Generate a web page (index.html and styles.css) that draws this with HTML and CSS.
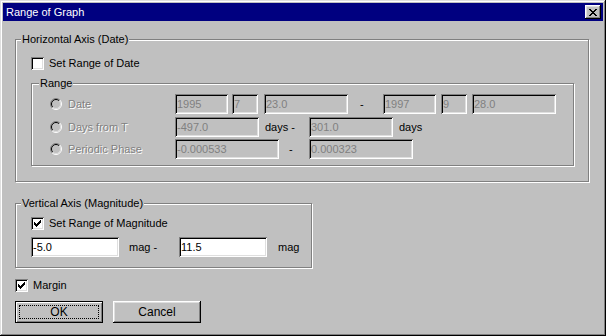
FILE: index.html
```html
<!DOCTYPE html>
<html>
<head>
<meta charset="utf-8">
<title>Range of Graph</title>
<link rel="stylesheet" href="styles.css">
</head>
<body>
<div class="window">
  <div class="titlebar">
    <span class="title">Range of Graph</span>
    <span class="close"><svg width="8" height="7" viewBox="0 0 8 7" shape-rendering="crispEdges"><path d="M0 0h2v1H0zM6 0h2v1H6zM1 1h2v1H1zM5 1h2v1H5zM2 2h4v1H2zM3 3h2v1H3zM2 4h4v1H2zM1 5h2v1H1zM5 5h2v1H5zM0 6h2v1H0zM6 6h2v1H6z" fill="#000"/></svg></span>
  </div>
  <div class="client">
    <div class="group hgroup">
      <span class="group-label">Horizontal Axis (Date)</span>
      <div class="check"><span class="box"></span><span>Set Range of Date</span></div>
      <div class="group rgroup">
        <span class="group-label range-label">Range</span>
        <div class="row">
          <div class="radio"><svg class="radio-dot" width="12" height="12" viewBox="0 0 12 12"><circle cx="6" cy="6" r="4" fill="#c0c0c0"/><path d="M2.1 9.9A5.5 5.5 0 0 1 9.9 2.1" fill="none" stroke="#808080"/><path d="M9.9 2.1A5.5 5.5 0 0 1 2.1 9.9" fill="none" stroke="#fff"/><path d="M2.8 9.2A4.5 4.5 0 0 1 9.2 2.8" fill="none" stroke="#000"/><path d="M9.2 2.8A4.5 4.5 0 0 1 2.8 9.2" fill="none" stroke="#dfdfdf"/></svg><span class="dis">Date</span></div>
          <input class="field w53" value="1995" disabled>
          <input class="field w26 ml4" value="7" disabled>
          <input class="field w84 ml6" value="23.0" disabled>
          <span class="dash dash-date">-</span>
          <input class="field w53" value="1997" disabled>
          <input class="field w26 ml5" value="9" disabled>
          <input class="field w84 ml5" value="28.0" disabled>
        </div>
        <div class="row row2">
          <div class="radio"><svg class="radio-dot" width="12" height="12" viewBox="0 0 12 12"><circle cx="6" cy="6" r="4" fill="#c0c0c0"/><path d="M2.1 9.9A5.5 5.5 0 0 1 9.9 2.1" fill="none" stroke="#808080"/><path d="M9.9 2.1A5.5 5.5 0 0 1 2.1 9.9" fill="none" stroke="#fff"/><path d="M2.8 9.2A4.5 4.5 0 0 1 9.2 2.8" fill="none" stroke="#000"/><path d="M9.2 2.8A4.5 4.5 0 0 1 2.8 9.2" fill="none" stroke="#dfdfdf"/></svg><span class="dis">Days from T</span></div>
          <input class="field w84" value="-497.0" disabled>
          <span class="unit days-dash">days -</span>
          <input class="field w84" value="301.0" disabled>
          <span class="unit days">days</span>
        </div>
        <div class="row row3">
          <div class="radio"><svg class="radio-dot" width="12" height="12" viewBox="0 0 12 12"><circle cx="6" cy="6" r="4" fill="#c0c0c0"/><path d="M2.1 9.9A5.5 5.5 0 0 1 9.9 2.1" fill="none" stroke="#808080"/><path d="M9.9 2.1A5.5 5.5 0 0 1 2.1 9.9" fill="none" stroke="#fff"/><path d="M2.8 9.2A4.5 4.5 0 0 1 9.2 2.8" fill="none" stroke="#000"/><path d="M9.2 2.8A4.5 4.5 0 0 1 2.8 9.2" fill="none" stroke="#dfdfdf"/></svg><span class="dis">Periodic Phase</span></div>
          <input class="field w104" value="-0.000533" disabled>
          <span class="dash dash-phase">-</span>
          <input class="field w104" value="0.000323" disabled>
        </div>
      </div>
    </div>

    <div class="group vgroup">
      <span class="group-label">Vertical Axis (Magnitude)</span>
      <div class="check"><span class="box"><svg width="13" height="13" viewBox="0 0 13 13" shape-rendering="crispEdges"><path d="M3 5h1v3H3zM4 6h1v3H4zM5 7h1v3H5zM6 6h1v3H6zM7 5h1v3H7zM8 4h1v3H8zM9 3h1v3H9z" fill="#000"/></svg></span><span>Set Range of Magnitude</span></div>
      <div class="row vrow">
        <input class="field w88 live" value="-5.0">
        <span class="unit mag-dash">mag -</span>
        <input class="field w88 live" value="11.5">
        <span class="unit mag">mag</span>
      </div>
    </div>

    <div class="check margin"><span class="box"><svg width="13" height="13" viewBox="0 0 13 13" shape-rendering="crispEdges"><path d="M3 5h1v3H3zM4 6h1v3H4zM5 7h1v3H5zM6 6h1v3H6zM7 5h1v3H7zM8 4h1v3H8zM9 3h1v3H9z" fill="#000"/></svg></span><span>Margin</span></div>

    <div class="buttons">
      <button class="btn default"><span class="focus">OK</span></button>
      <button class="btn">Cancel</button>
    </div>
  </div>
</div>
</body>
</html>
```
FILE: styles.css
```css
* { box-sizing: border-box; }
html, body { margin: 0; padding: 0; }
body {
  background: #c0c0c0;
  font: 11px "Liberation Sans", Arial, sans-serif;
  color: #000;
}
.window {
  width: 606px;
  height: 336px;
  padding: 3px;
  background: #c0c0c0;
  box-shadow: inset -1px -1px #000, inset 1px 1px #dfdfdf, inset -2px -2px #808080, inset 2px 2px #fff;
}
.titlebar {
  height: 18px;
  background: #000080;
  color: #fff;
  display: flex;
  align-items: center;
  justify-content: space-between;
  padding: 0 2px 0 3px;
}
.title { line-height: 18px; font-size: 11px; }
.close {
  width: 16px;
  height: 14px;
  background: #c0c0c0;
  display: flex;
  align-items: center;
  justify-content: center;
  box-shadow: inset -1px -1px #000, inset 1px 1px #fff, inset -2px -2px #808080, inset 2px 2px #dfdfdf;
}
.close svg { display: block; }
.client { padding: 18px 0 0 12px; }

.group {
  position: relative;
  border: 1px solid #808080;
  box-shadow: 1px 1px 0 #fff, inset 1px 1px 0 #fff;
}
.group-label {
  position: absolute;
  top: -7px;
  left: 5px;
  padding: 0 1px;
  line-height: 13px;
  background: #c0c0c0;
  white-space: nowrap;
}
.range-label { left: 7px; }

.hgroup { width: 574px; padding: 17px 0 15px 15px; }
.rgroup { width: 543px; margin-top: 13px; padding: 10px 0 6px 18px; }
.vgroup { width: 297px; margin-top: 21px; padding: 13px 0 10px 15px; }

.check {
  display: flex;
  align-items: center;
  height: 13px;
  line-height: 13px;
  white-space: nowrap;
}
.box {
  width: 13px;
  height: 13px;
  margin-right: 5px;
  background: #fff;
  flex: none;
  box-shadow: inset 1px 1px #808080, inset -1px -1px #fff, inset 2px 2px #000, inset -2px -2px #dfdfdf;
}
.box svg { display: block; }

.row { display: flex; align-items: center; height: 20px; white-space: nowrap; }
.row2 { margin-top: 3px; }
.row3 { margin-top: 2px; }
.vrow { margin-top: 7px; }

.radio { width: 125px; display: flex; align-items: center; flex: none; }
.radio-dot { display: block; margin-right: 6px; }
.dis { color: #808080; text-shadow: 1px 1px 0 #fff; }

.field {
  height: 20px;
  border: none;
  outline: none;
  margin: 0;
  padding: 0 2px;
  font: inherit;
  color: #000;
  background: #fff;
  flex: none;
  box-shadow: inset 1px 1px #808080, inset -1px -1px #fff, inset 2px 2px #000, inset -2px -2px #dfdfdf;
}
.field:disabled { background: #c0c0c0; color: #808080; -webkit-text-fill-color: #808080; }
.w26 { width: 26px; }
.w53 { width: 53px; }
.w84 { width: 84px; }
.w88 { width: 88px; }
.w104 { width: 104px; }
.ml4 { margin-left: 4px; }
.ml5 { margin-left: 5px; }
.ml6 { margin-left: 6px; }

.dash { flex: none; }
.dash-date { width: 35px; padding-left: 12px; }
.dash-phase { width: 30px; padding-left: 10px; }
.unit { flex: none; }
.days-dash { width: 44px; margin-left: 6px; }
.days { margin-left: 6px; }
.mag-dash { width: 50px; margin-left: 10px; }
.mag { margin-left: 11px; }

.margin { margin-top: 11px; }
.buttons { display: flex; gap: 10px; margin-top: 9px; }
.btn {
  width: 88px;
  height: 22px;
  margin: 0;
  padding: 0;
  border: none;
  background: #c0c0c0;
  font: inherit;
  font-size: 12px;
  color: #000;
  display: flex;
  align-items: center;
  justify-content: center;
  box-shadow: inset -1px -1px #000, inset 1px 1px #fff, inset -2px -2px #808080, inset 2px 2px #dfdfdf;
}
.btn.default {
  border: 1px solid #000;
  padding: 2px;
  box-shadow: inset 1px 1px #fff, inset -1px -1px #808080;
}
.focus {
  flex: 1;
  align-self: stretch;
  margin: 1px;
  border: 1px dotted #000;
  display: flex;
  align-items: center;
  justify-content: center;
}
```
